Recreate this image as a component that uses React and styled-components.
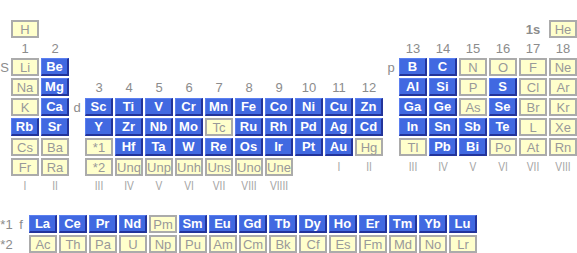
import styled, { createGlobalStyle } from 'styled-components'

const GlobalStyle = createGlobalStyle`
  html, body {
    margin: 0;
    padding: 0;
    background: #fff;
    font-family: 'Liberation Sans', Arial, sans-serif;
  }
`

// tokens: b = blue element, y = pale element, n = group number,
// r = roman numeral, l = block label, s = bold label, '' = empty
const mainRows = [
  ['', 'y:H', '', '', '', '', '', '', '', '', '', '', '', '', '', '', '', '', '', 's:1s', 'y:He'],
  ['', 'n:1', 'n:2', '', '', '', '', '', '', '', '', '', '', '', '', 'n:13', 'n:14', 'n:15', 'n:16', 'n:17', 'n:18'],
  ['l:S', 'y:Li', 'b:Be', '', '', '', '', '', '', '', '', '', '', '', 'l:p', 'b:B', 'b:C', 'y:N', 'y:O', 'y:F', 'y:Ne'],
  ['', 'y:Na', 'b:Mg', '', 'n:3', 'n:4', 'n:5', 'n:6', 'n:7', 'n:8', 'n:9', 'n:10', 'n:11', 'n:12', '', 'b:Al', 'b:Si', 'y:P', 'b:S', 'y:Cl', 'y:Ar'],
  ['', 'y:K', 'b:Ca', 'l:d', 'b:Sc', 'b:Ti', 'b:V', 'b:Cr', 'b:Mn', 'b:Fe', 'b:Co', 'b:Ni', 'b:Cu', 'b:Zn', '', 'b:Ga', 'b:Ge', 'y:As', 'b:Se', 'y:Br', 'y:Kr'],
  ['', 'b:Rb', 'b:Sr', '', 'b:Y', 'b:Zr', 'b:Nb', 'b:Mo', 'y:Tc', 'b:Ru', 'b:Rh', 'b:Pd', 'b:Ag', 'b:Cd', '', 'b:In', 'b:Sn', 'b:Sb', 'b:Te', 'y:L', 'y:Xe'],
  ['', 'y:Cs', 'y:Ba', '', 'y:*1', 'b:Hf', 'b:Ta', 'b:W', 'b:Re', 'b:Os', 'b:Ir', 'b:Pt', 'b:Au', 'y:Hg', '', 'y:Tl', 'b:Pb', 'b:Bi', 'y:Po', 'y:At', 'y:Rn'],
  ['', 'y:Fr', 'y:Ra', '', 'y:*2', 'y:Unq', 'y:Unp', 'y:Unh', 'y:Uns', 'y:Uno', 'y:Une', '', 'r:I', 'r:II', '', 'r:III', 'r:IV', 'r:V', 'r:VI', 'r:VII', 'r:VIII'],
  ['', 'r:I', 'r:II', '', 'r:III', 'r:IV', 'r:V', 'r:VI', 'r:VII', 'r:VIII', 'r:VIIII', '', '', '', '', '', '', '', '', '', ''],
]

const fRows = [
  ['l:*1', 'l:f', 'b:La', 'b:Ce', 'b:Pr', 'b:Nd', 'y:Pm', 'b:Sm', 'b:Eu', 'b:Gd', 'b:Tb', 'b:Dy', 'b:Ho', 'b:Er', 'b:Tm', 'b:Yb', 'b:Lu'],
  ['l:*2', '', 'y:Ac', 'y:Th', 'y:Pa', 'y:U', 'y:Np', 'y:Pu', 'y:Am', 'y:Cm', 'y:Bk', 'y:Cf', 'y:Es', 'y:Fm', 'y:Md', 'y:No', 'y:Lr'],
]

const renderCell = (token, key) => {
  if (!token) return <Empty key={key} />
  const [kind, text] = token.split(':')
  if (kind === 'b' || kind === 'y') return <Element key={key} $blue={kind === 'b'}>{text}</Element>
  if (kind === 'n') return <GroupNum key={key}>{text}</GroupNum>
  if (kind === 'r') return <Roman key={key}>{text}</Roman>
  if (kind === 's') return <BlockLabel key={key} $bold>{text}</BlockLabel>
  return <BlockLabel key={key}>{text}</BlockLabel>
}

export default function App() {
  return (
    <>
      <GlobalStyle />
      <Page>
        <MainTable>
          {mainRows.map((row, i) => row.map((t, j) => renderCell(t, `${i}-${j}`)))}
        </MainTable>
        <FTable>
          {fRows.map((row, i) => row.map((t, j) => renderCell(t, `f${i}-${j}`)))}
        </FTable>
      </Page>
    </>
  )
}

const Page = styled.div`
  width: 577px;
  height: 253px;
  padding-top: 20px;
  box-sizing: border-box;
  overflow: hidden;
`

const MainTable = styled.div`
  display: grid;
  grid-template-columns: 9px 28px 28px 12px repeat(10, 28px) 12px repeat(6, 28px);
  grid-template-rows: 18px 16px repeat(6, 18px) 16px;
  gap: 2px;
`

const FTable = styled.div`
  display: grid;
  grid-template-columns: 13px 12px repeat(15, 28px);
  grid-template-rows: 18px 18px;
  gap: 2px;
  margin-top: 21px;
`

const Empty = styled.div``

const Element = styled.div`
  box-sizing: border-box;
  display: flex;
  align-items: center;
  justify-content: center;
  font-size: 13px;
  line-height: 1;
  font-weight: ${(p) => (p.$blue ? 'bold' : 'normal')};
  color: ${(p) => (p.$blue ? '#ffffff' : '#999999')};
  background: ${(p) => (p.$blue ? '#4169e1' : '#ffffcc')};
  border: ${(p) => (p.$blue ? '1px solid' : '2px solid')};
  border-color: ${(p) => (p.$blue ? '#5b7ff0 #23349b #23349b #5b7ff0' : '#ababab')};
  border-right-width: 2px;
  border-bottom-width: 2px;
`

const GroupNum = styled.div`
  display: flex;
  align-items: center;
  justify-content: center;
  font-size: 13px;
  color: #8c8c8c;
`

const Roman = styled.div`
  display: flex;
  align-items: center;
  justify-content: center;
  font-size: 12px;
  color: #a6a6a6;
  transform: scaleX(0.85);
`

const BlockLabel = styled.div`
  display: flex;
  align-items: center;
  justify-content: center;
  white-space: nowrap;
  font-size: 13px;
  font-weight: ${(p) => (p.$bold ? 'bold' : 'normal')};
  color: #8c8c8c;
`
